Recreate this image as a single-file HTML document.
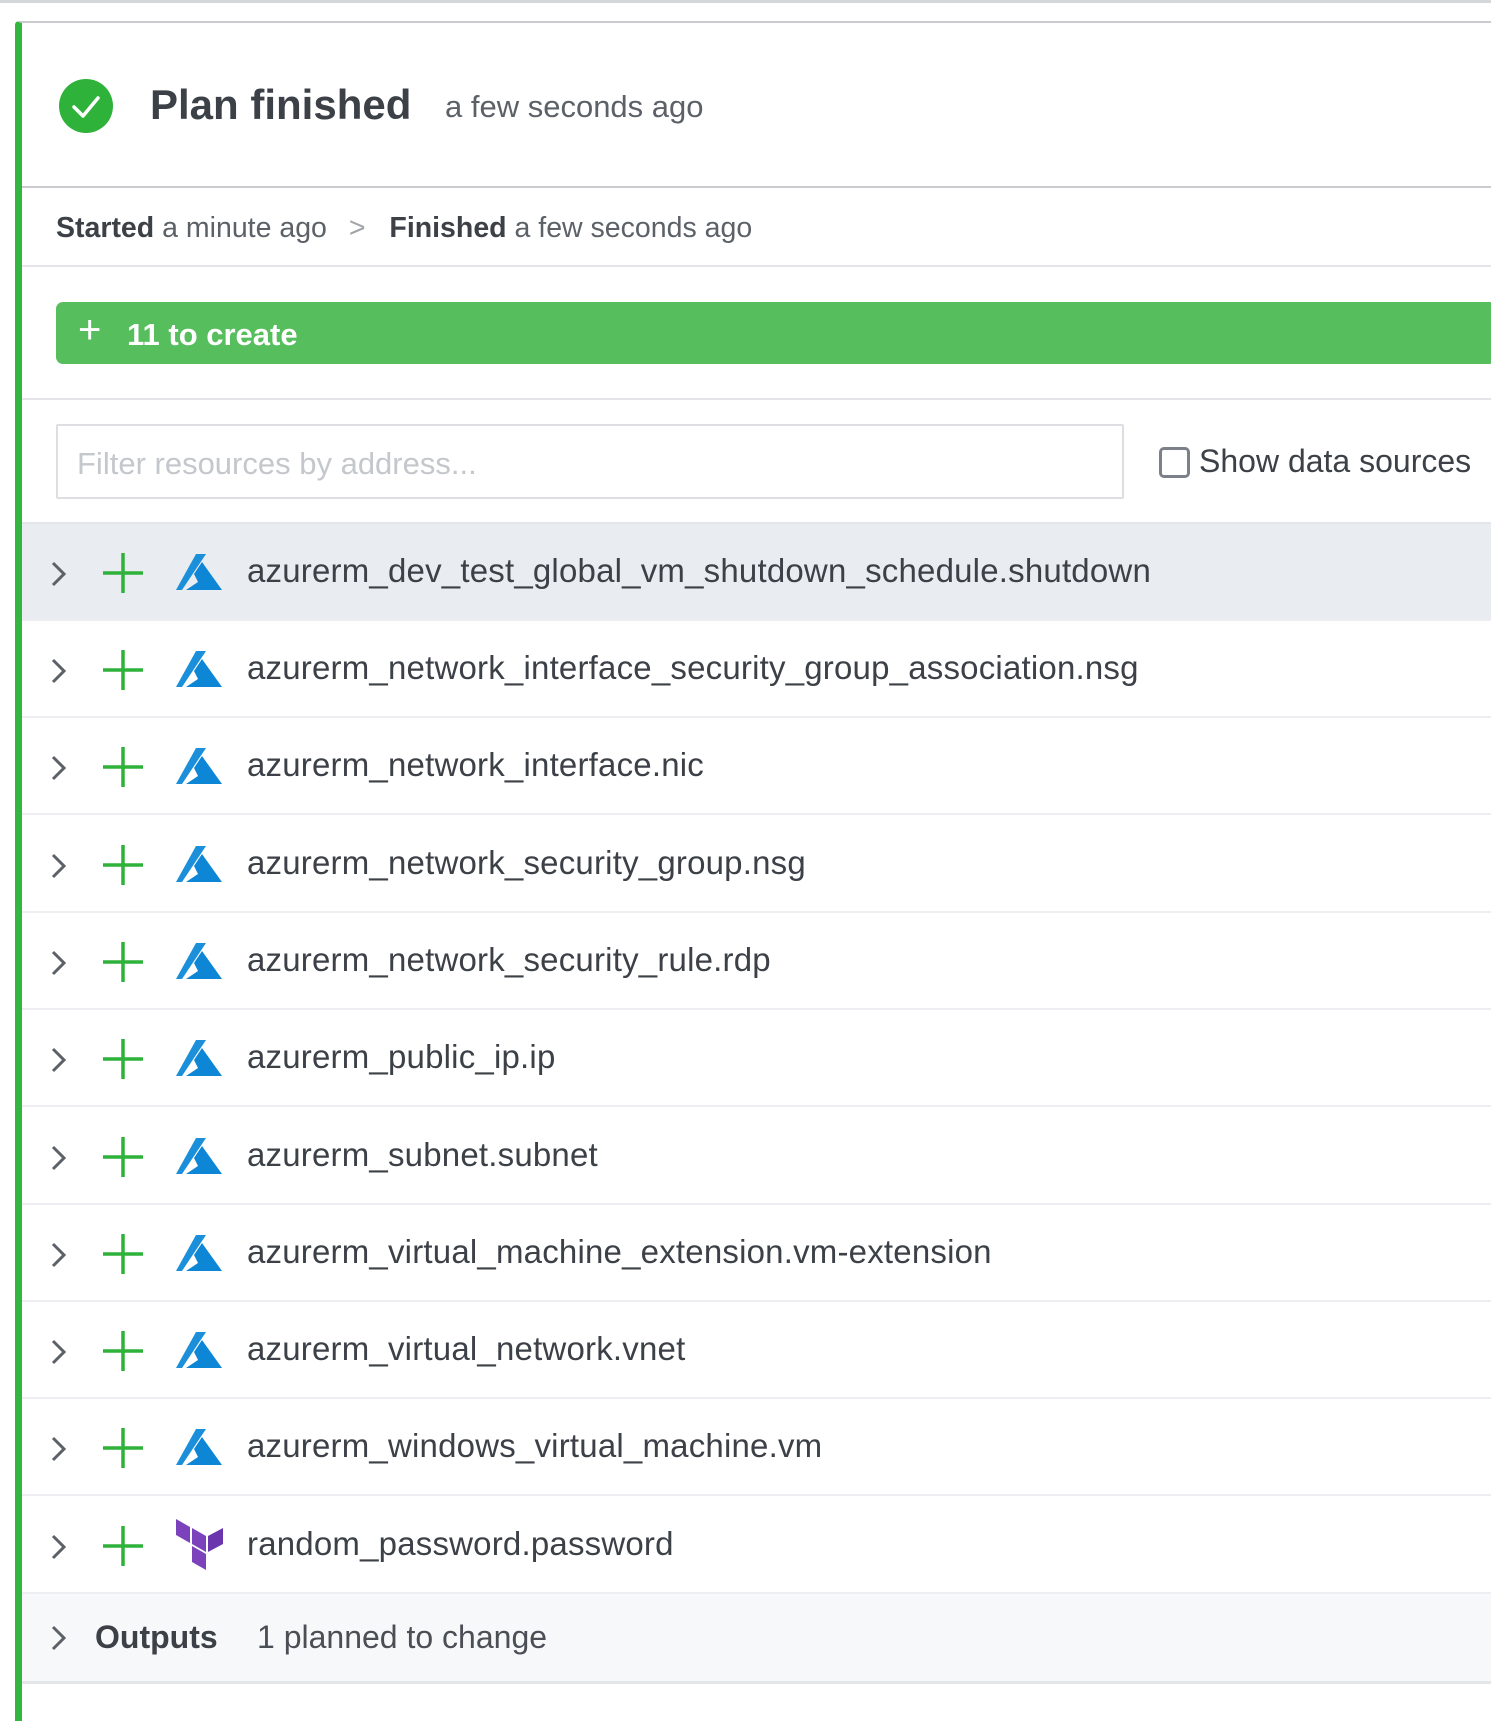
<!DOCTYPE html>
<html><head><meta charset="utf-8"><style>
*{box-sizing:border-box;margin:0;padding:0}
body{width:1491px;height:1689px;background:#fff;font-family:"Liberation Sans",sans-serif;color:#3c4047;position:relative;overflow:hidden}
.topline{position:absolute;left:0;top:0;width:1491px;height:3px;background:#d4d6d9}
.card{position:absolute;left:15px;top:21px;width:1480px;height:1700px;border-top:2px solid #c9cbcf;border-left:7px solid #34b53f;border-top-left-radius:4px}
.abs{position:absolute;white-space:nowrap}
.hr{position:absolute;left:22px;width:1470px;height:2px;background:#e3e5e8}
.row{position:absolute;left:22px;width:1470px;height:97px;border-bottom:2px solid #eceef1}
.row .chev{position:absolute;left:28px;top:37px}
.row .plus{position:absolute;left:81px;top:29px}
.row .ic{position:absolute;left:154px;top:30px}
.row .t{position:absolute;left:225px;top:28px;font-size:33px;letter-spacing:0.2px}
</style></head><body>
<div class="topline"></div>
<div class="card"></div>
<svg class="abs" style="left:59px;top:79px" width="54" height="54"><circle cx="27" cy="27" r="27" fill="#2fb23a"/><path d="M15 28 L24 37 L39 19" stroke="#fff" stroke-width="3.5" fill="none" stroke-linecap="round" stroke-linejoin="round"/></svg>
<div class="abs" style="left:150px;top:81px;font-size:42px;font-weight:bold;color:#3c4047">Plan finished</div>
<div class="abs" style="left:445px;top:89px;font-size:31px;color:#5c6168">a few seconds ago</div>
<div class="hr" style="top:186px;background:#c9cbcf"></div>
<div class="abs" style="left:56px;top:212px;font-size:28.5px;color:#5c6168"><b style="color:#3c4047">Started</b> a minute ago <span style="color:#a0a4a9;margin:0 16px 0 14px">&gt;</span> <b style="color:#3c4047">Finished</b> a few seconds ago</div>
<div class="hr" style="top:265px"></div>
<div class="abs" style="left:56px;top:302px;width:1440px;height:62px;background:#57be5e;border-radius:7px"></div>
<div class="abs" style="left:78px;top:308px;font-size:40px;color:#fff">+</div>
<div class="abs" style="left:127px;top:317px;font-size:31px;font-weight:bold;color:#fff">11 to create</div>
<div class="hr" style="top:398px"></div>
<div class="abs" style="left:56px;top:424px;width:1068px;height:75px;border:2px solid #dcdee1;border-radius:2px"></div>
<div class="abs" style="left:77px;top:446px;font-size:31px;color:#c4c7cb">Filter resources by address...</div>
<div class="abs" style="left:1159px;top:447px;width:31px;height:31px;border:3px solid #7c8088;border-radius:5px"></div>
<div class="abs" style="left:1199px;top:443px;font-size:32px;color:#3c4047">Show data sources</div>
<div class="hr" style="top:522px"></div>

<div class="row" style="top:524px;background:#e9ecf0">
<svg class="chev" width="18" height="26"><path d="M3 2 L14 13 L3 24" stroke="#5c6168" stroke-width="3" fill="none"/></svg>
<svg class="plus" width="40" height="40"><path d="M20 0V40M0 20H40" stroke="#2fb23a" stroke-width="3.5"/></svg>
<svg class="ic" width="48" height="42"><path d="M20 0 L30 0 L6 36 L0 36 Z" fill="#1b8fd9"/><path d="M26 8 L46 36 L10 36 L22 28 L18 20 Z" fill="#0d86d6"/></svg>
<div class="t">azurerm_dev_test_global_vm_shutdown_schedule.shutdown</div></div>
<div class="row" style="top:621px"><svg class="chev" width="18" height="26"><path d="M3 2 L14 13 L3 24" stroke="#5c6168" stroke-width="3" fill="none"/></svg><svg class="plus" width="40" height="40"><path d="M20 0V40M0 20H40" stroke="#2fb23a" stroke-width="3.5"/></svg><svg class="ic" width="48" height="42"><path d="M20 0 L30 0 L6 36 L0 36 Z" fill="#1b8fd9"/><path d="M26 8 L46 36 L10 36 L22 28 L18 20 Z" fill="#0d86d6"/></svg><div class="t">azurerm_network_interface_security_group_association.nsg</div></div>
<div class="row" style="top:718px"><svg class="chev" width="18" height="26"><path d="M3 2 L14 13 L3 24" stroke="#5c6168" stroke-width="3" fill="none"/></svg><svg class="plus" width="40" height="40"><path d="M20 0V40M0 20H40" stroke="#2fb23a" stroke-width="3.5"/></svg><svg class="ic" width="48" height="42"><path d="M20 0 L30 0 L6 36 L0 36 Z" fill="#1b8fd9"/><path d="M26 8 L46 36 L10 36 L22 28 L18 20 Z" fill="#0d86d6"/></svg><div class="t">azurerm_network_interface.nic</div></div>
<div class="row" style="top:816px"><svg class="chev" width="18" height="26"><path d="M3 2 L14 13 L3 24" stroke="#5c6168" stroke-width="3" fill="none"/></svg><svg class="plus" width="40" height="40"><path d="M20 0V40M0 20H40" stroke="#2fb23a" stroke-width="3.5"/></svg><svg class="ic" width="48" height="42"><path d="M20 0 L30 0 L6 36 L0 36 Z" fill="#1b8fd9"/><path d="M26 8 L46 36 L10 36 L22 28 L18 20 Z" fill="#0d86d6"/></svg><div class="t">azurerm_network_security_group.nsg</div></div>
<div class="row" style="top:913px"><svg class="chev" width="18" height="26"><path d="M3 2 L14 13 L3 24" stroke="#5c6168" stroke-width="3" fill="none"/></svg><svg class="plus" width="40" height="40"><path d="M20 0V40M0 20H40" stroke="#2fb23a" stroke-width="3.5"/></svg><svg class="ic" width="48" height="42"><path d="M20 0 L30 0 L6 36 L0 36 Z" fill="#1b8fd9"/><path d="M26 8 L46 36 L10 36 L22 28 L18 20 Z" fill="#0d86d6"/></svg><div class="t">azurerm_network_security_rule.rdp</div></div>
<div class="row" style="top:1010px"><svg class="chev" width="18" height="26"><path d="M3 2 L14 13 L3 24" stroke="#5c6168" stroke-width="3" fill="none"/></svg><svg class="plus" width="40" height="40"><path d="M20 0V40M0 20H40" stroke="#2fb23a" stroke-width="3.5"/></svg><svg class="ic" width="48" height="42"><path d="M20 0 L30 0 L6 36 L0 36 Z" fill="#1b8fd9"/><path d="M26 8 L46 36 L10 36 L22 28 L18 20 Z" fill="#0d86d6"/></svg><div class="t">azurerm_public_ip.ip</div></div>
<div class="row" style="top:1108px"><svg class="chev" width="18" height="26"><path d="M3 2 L14 13 L3 24" stroke="#5c6168" stroke-width="3" fill="none"/></svg><svg class="plus" width="40" height="40"><path d="M20 0V40M0 20H40" stroke="#2fb23a" stroke-width="3.5"/></svg><svg class="ic" width="48" height="42"><path d="M20 0 L30 0 L6 36 L0 36 Z" fill="#1b8fd9"/><path d="M26 8 L46 36 L10 36 L22 28 L18 20 Z" fill="#0d86d6"/></svg><div class="t">azurerm_subnet.subnet</div></div>
<div class="row" style="top:1205px"><svg class="chev" width="18" height="26"><path d="M3 2 L14 13 L3 24" stroke="#5c6168" stroke-width="3" fill="none"/></svg><svg class="plus" width="40" height="40"><path d="M20 0V40M0 20H40" stroke="#2fb23a" stroke-width="3.5"/></svg><svg class="ic" width="48" height="42"><path d="M20 0 L30 0 L6 36 L0 36 Z" fill="#1b8fd9"/><path d="M26 8 L46 36 L10 36 L22 28 L18 20 Z" fill="#0d86d6"/></svg><div class="t">azurerm_virtual_machine_extension.vm-extension</div></div>
<div class="row" style="top:1302px"><svg class="chev" width="18" height="26"><path d="M3 2 L14 13 L3 24" stroke="#5c6168" stroke-width="3" fill="none"/></svg><svg class="plus" width="40" height="40"><path d="M20 0V40M0 20H40" stroke="#2fb23a" stroke-width="3.5"/></svg><svg class="ic" width="48" height="42"><path d="M20 0 L30 0 L6 36 L0 36 Z" fill="#1b8fd9"/><path d="M26 8 L46 36 L10 36 L22 28 L18 20 Z" fill="#0d86d6"/></svg><div class="t">azurerm_virtual_network.vnet</div></div>
<div class="row" style="top:1399px"><svg class="chev" width="18" height="26"><path d="M3 2 L14 13 L3 24" stroke="#5c6168" stroke-width="3" fill="none"/></svg><svg class="plus" width="40" height="40"><path d="M20 0V40M0 20H40" stroke="#2fb23a" stroke-width="3.5"/></svg><svg class="ic" width="48" height="42"><path d="M20 0 L30 0 L6 36 L0 36 Z" fill="#1b8fd9"/><path d="M26 8 L46 36 L10 36 L22 28 L18 20 Z" fill="#0d86d6"/></svg><div class="t">azurerm_windows_virtual_machine.vm</div></div>
<div class="row" style="top:1497px"><svg class="chev" width="18" height="26"><path d="M3 2 L14 13 L3 24" stroke="#5c6168" stroke-width="3" fill="none"/></svg><svg class="plus" width="40" height="40"><path d="M20 0V40M0 20H40" stroke="#2fb23a" stroke-width="3.5"/></svg>
<svg class="ic" style="top:22px" width="48" height="56"><path d="M0 0 L14 8 L14 24 L0 16 Z" fill="#7b42bc"/><path d="M16 9 L30 17 L30 33 L16 25 Z" fill="#7b42bc"/><path d="M32 17 L47 9 L47 25 L32 33 Z" fill="#6a35ad"/><path d="M16 27 L30 35 L30 51 L16 43 Z" fill="#7b42bc"/></svg>
<div class="t">random_password.password</div></div>
<div class="row" style="top:1594px;height:90px;background:#f7f8fa;border-bottom:3px solid #e3e5e8">
<svg class="chev" style="top:31px" width="18" height="26"><path d="M3 2 L14 13 L3 24" stroke="#5c6168" stroke-width="3" fill="none"/></svg>
<div class="abs" style="left:73px;top:25px;font-size:32px;font-weight:bold">Outputs</div>
<div class="abs" style="left:235px;top:25px;font-size:32px;color:#4a4f56">1 planned to change</div></div>
</body></html>
